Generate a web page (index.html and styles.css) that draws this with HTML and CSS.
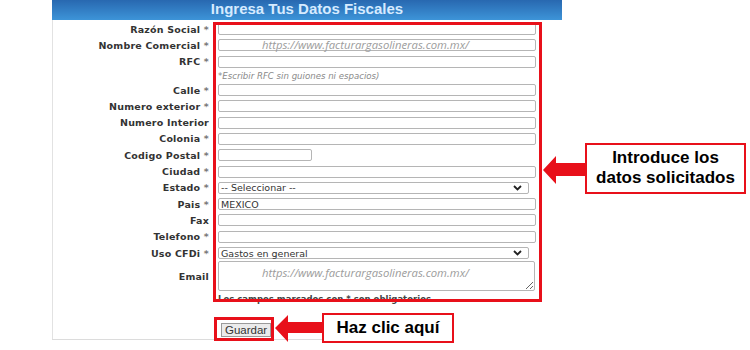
FILE: index.html
```html
<!DOCTYPE html>
<html lang="es">
<head>
    <meta charset="UTF-8">
    <meta name="viewport" content="width=device-width, initial-scale=1.0">
    <title>Datos Fiscales</title>
    <link rel="stylesheet" href="styles.css">
</head>
<body>
    <div class="panel">
        <div class="panel-head">Ingresa Tus Datos Fiscales</div>
        <form class="fiscal-form">
            <div class="row"><label>Razón Social <span class="req">*</span></label><input type="text"></div>
            <div class="row"><label>Nombre Comercial <span class="req">*</span></label><input type="text"></div>
            <div class="row"><label>RFC <span class="req">*</span></label><input type="text"></div>
            <div class="hint">*Escribir RFC sin guiones ni espacios)</div>
            <div class="row"><label>Calle <span class="req">*</span></label><input type="text"></div>
            <div class="row"><label>Numero exterior <span class="req">*</span></label><input type="text"></div>
            <div class="row"><label>Numero Interior</label><input type="text"></div>
            <div class="row"><label>Colonia <span class="req">*</span></label><input type="text"></div>
            <div class="row"><label>Codigo Postal <span class="req">*</span></label><input type="text" class="short"></div>
            <div class="row"><label>Ciudad <span class="req">*</span></label><input type="text"></div>
            <div class="row"><label>Estado <span class="req">*</span></label>
                <div class="select-box">
                    <span>-- Seleccionar --</span>
                    <svg width="9" height="6" viewBox="0 0 9 6"><path d="M1 1 L4.5 4.5 L8 1" fill="none" stroke="#222" stroke-width="1.8"/></svg>
                </div>
            </div>
            <div class="row"><label>Pais <span class="req">*</span></label><input type="text" value="MEXICO"></div>
            <div class="row"><label>Fax</label><input type="text"></div>
            <div class="row"><label>Telefono <span class="req">*</span></label><input type="text"></div>
            <div class="row"><label>Uso CFDi <span class="req">*</span></label>
                <div class="select-box">
                    <span>Gastos en general</span>
                    <svg width="9" height="6" viewBox="0 0 9 6"><path d="M1 1 L4.5 4.5 L8 1" fill="none" stroke="#222" stroke-width="1.8"/></svg>
                </div>
            </div>
            <div class="row email-row"><label>Email</label><textarea></textarea></div>
            <div class="note">Los campos marcados con * son obligatorios</div>
            <div class="actions"><button type="button">Guardar</button></div>
        </form>
    </div>

    <!-- marca de agua del sitio -->
    <div class="watermark wm-top">https://www.facturargasolineras.com.mx/</div>
    <div class="watermark wm-email">https://www.facturargasolineras.com.mx/</div>

    <!-- anotaciones -->
    <div class="mark mark-fields"></div>
    <div class="mark mark-button"></div>

    <svg class="arrow arrow-fields" width="48" height="32" viewBox="0 0 48 32"><polygon points="2,16 15,2 15,9 48,9 48,22 15,22 15,30" fill="#e8101a"/></svg>
    <div class="callout callout-fields">Introduce los<br>datos solicitados</div>

    <svg class="arrow arrow-button" width="52" height="31" viewBox="0 0 52 31"><polygon points="2,15 15,2 15,9 52,9 52,20 15,20 15,29" fill="#e8101a"/></svg>
    <div class="callout callout-button">Haz clic aquí</div>
</body>
</html>
```

FILE: styles.css
```css
body {
    margin: 0;
    width: 750px;
    height: 350px;
    overflow: hidden;
    position: relative;
    background: #fff;
    font-family: "DejaVu Sans", Verdana, sans-serif;
}
.panel {
    margin-left: 52px;
    width: 510px;
}
.panel-head {
    height: 20px;
    line-height: 20px;
    background: linear-gradient(#2868b0, #3d94d8);
    color: #d6ebff;
    text-align: center;
    font: bold 15px "Liberation Sans", Arial, sans-serif;
}
.fiscal-form {
    padding-top: 1px;
    box-shadow: inset 1px 0 #e2e2e2;
}
.row {
    display: flex;
    align-items: center;
    height: 16.3px;
}
.row label {
    width: 157px;
    flex-shrink: 0;
    margin-right: 9px;
    text-align: right;
    font-size: 9.5px;
    font-weight: bold;
    letter-spacing: 0.2px;
    color: #333;
}
.req {
    color: #777;
}
input[type="text"] {
    width: 318px;
    height: 12px;
    box-sizing: border-box;
    border: 1px solid #b5b5b5;
    border-radius: 2px;
    padding: 0 2px;
    font: 9.5px "DejaVu Sans", Verdana, sans-serif;
    color: #333;
    background: #fff;
}
input.short {
    width: 94px;
}
.select-box {
    display: flex;
    align-items: center;
    justify-content: space-between;
    width: 311px;
    height: 12px;
    box-sizing: border-box;
    border: 1px solid #b5b5b5;
    border-radius: 2px;
    padding: 0 6px 0 2px;
    font-size: 9.5px;
    color: #333;
    background: #fff;
}
.hint {
    height: 12px;
    line-height: 12px;
    padding-left: 166px;
    font-size: 8.6px;
    font-style: italic;
    color: #8a8a8a;
}
.row.email-row {
    height: 30px;
}
textarea {
    width: 317px;
    height: 30px;
    box-sizing: border-box;
    border: 1px solid #b5b5b5;
    border-radius: 2px;
}
.note {
    padding-left: 166px;
    margin-top: 3px;
    height: 10px;
    font-size: 8.5px;
    font-weight: bold;
    color: #444;
}
.actions {
    padding: 19px 0 2px 169px;
    width: 230px;
    border-bottom: 1px solid #dcdcdc;
}
.actions button {
    display: block;
    height: 14px;
    padding: 0 3px;
    border: 1px solid #9a9a9a;
    background: #ebebeb;
    font: 11.5px "Liberation Sans", Arial, sans-serif;
    line-height: 12px;
    color: #333;
}

.watermark {
    position: absolute;
    left: 262px;
    font: italic 11.3px "Open Sans", sans-serif;
    color: #9c9c9c;
    white-space: nowrap;
}
.wm-top {
    top: 37px;
}
.wm-email {
    top: 265px;
}

.mark {
    position: absolute;
    border: 3px solid #e8101a;
    box-sizing: border-box;
}
.mark-fields {
    left: 213px;
    top: 22px;
    width: 329px;
    height: 280px;
}
.mark-button {
    left: 214px;
    top: 317px;
    width: 60px;
    height: 24px;
}
.arrow {
    position: absolute;
}
.arrow-fields {
    left: 541px;
    top: 154px;
}
.arrow-button {
    left: 273px;
    top: 313px;
}
.callout {
    position: absolute;
    box-sizing: border-box;
    border: 2px solid #e8101a;
    background: #fff;
    text-align: center;
    font: bold 17px "Liberation Sans", Arial, sans-serif;
    color: #000;
}
.callout-fields {
    left: 585px;
    top: 143px;
    width: 161px;
    height: 51px;
    line-height: 20px;
    padding-top: 3px;
}
.callout-button {
    left: 322px;
    top: 313px;
    width: 132px;
    height: 30px;
    line-height: 26px;
}
```
